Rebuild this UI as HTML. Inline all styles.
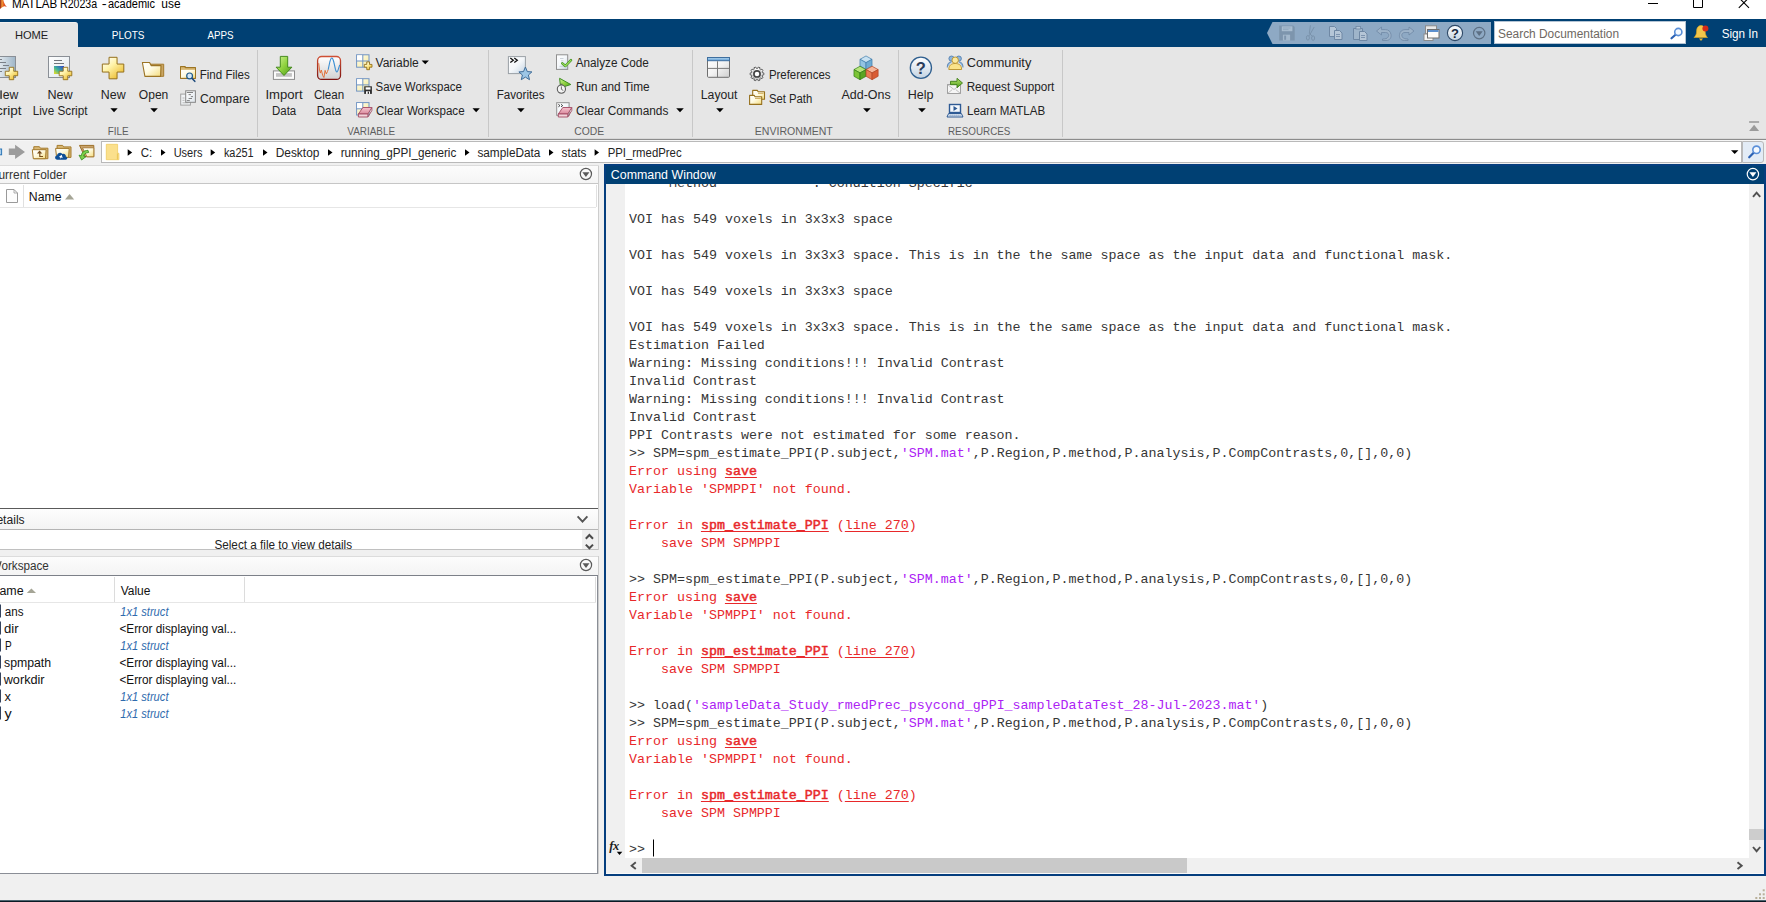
<!DOCTYPE html>
<html><head><meta charset="utf-8"><title>MATLAB R2023a - academic use</title>
<style>
html,body{margin:0;padding:0;}
body{width:1766px;height:902px;position:relative;overflow:hidden;background:#fff;font-family:"Liberation Sans",sans-serif;}
#bx div{position:absolute;}
svg{position:absolute;left:0;top:0;}
svg text{white-space:pre;}
#conwrap{position:absolute;left:625px;top:184px;width:1124px;height:674px;overflow:hidden;}
#con{position:absolute;left:4px;top:-8.55px;margin:0;font-family:"Liberation Mono",monospace;font-size:12.200px;line-height:18px;color:#363636;white-space:pre;transform:scaleX(1.09272);transform-origin:0 0;}
#con .s{color:#ad22f5;}
#con .e{color:#e8282a;}
#con b{font-weight:normal;-webkit-text-stroke:.45px currentColor;}
#con u{text-decoration:underline;text-underline-offset:1.5px;text-decoration-thickness:1px;}
</style></head>
<body>
<div id="bx">
<div style="left:0px;top:19px;width:1766px;height:28px;background:#004073;"></div>
<div style="left:0px;top:47px;width:1766px;height:92px;background:#e6e6e6;"></div>
<div style="left:0px;top:138px;width:1766px;height:1px;background:#d8d8d8;"></div>
<div style="left:0px;top:139px;width:1766px;height:1px;background:#8c8c8c;"></div>
<div style="left:0px;top:140px;width:1766px;height:1px;background:#f6f6f6;"></div>
<div style="left:0px;top:141px;width:1766px;height:25px;background:#f0f0f0;"></div>
<div style="left:0px;top:166px;width:1766px;height:735px;background:#f0f0f0;"></div>
<div style="left:0px;top:22px;width:78px;height:25px;background:#e6e6e6;border-radius:0 3px 0 0;border-top:1px solid #f3f1ef;box-sizing:border-box;"></div>
<div style="left:257px;top:50px;width:1px;height:87px;background:#c8c8c8;"></div>
<div style="left:488px;top:50px;width:1px;height:87px;background:#c8c8c8;"></div>
<div style="left:692px;top:50px;width:1px;height:87px;background:#c8c8c8;"></div>
<div style="left:898px;top:50px;width:1px;height:87px;background:#c8c8c8;"></div>
<div style="left:1062px;top:50px;width:1px;height:87px;background:#c8c8c8;"></div>
<div style="left:1494px;top:21px;width:192px;height:23px;background:#fff;border:1px solid #b4c4d4;box-sizing:border-box;"></div>
<div style="left:101px;top:141px;width:1641px;height:22px;background:#fff;border:1px solid #b9b9b9;box-sizing:border-box;"></div>
<div style="left:1742px;top:141px;width:22px;height:22px;background:#e3ecf6;border:1px solid #b9b9b9;box-sizing:border-box;border-radius:0 3px 3px 0;"></div>
<div style="left:0px;top:165px;width:599px;height:1px;background:#dcdcdc;"></div>
<div style="left:0px;top:166px;width:598px;height:18px;background:linear-gradient(#fcfcfc,#f4f4f4);"></div>
<div style="left:0px;top:183px;width:598px;height:1px;background:#c6c6c6;"></div>
<div style="left:0px;top:184px;width:598px;height:324px;background:#fff;"></div>
<div style="left:0px;top:207px;width:596px;height:1px;background:#e6e6e6;"></div>
<div style="left:23px;top:185px;width:1px;height:22px;background:#e0e0e0;"></div>
<div style="left:596px;top:185px;width:1px;height:22px;background:#e0e0e0;"></div>
<div style="left:598px;top:166px;width:1px;height:708px;background:#cdcdcd;"></div>
<div style="left:0px;top:508px;width:598px;height:1px;background:#5a5a5a;"></div>
<div style="left:0px;top:509px;width:598px;height:20px;background:linear-gradient(#fdfdfd,#f3f3f3);"></div>
<div style="left:0px;top:529px;width:598px;height:1px;background:#b4b4b4;"></div>
<div style="left:0px;top:530px;width:598px;height:19px;background:#fff;"></div>
<div style="left:582px;top:530px;width:16px;height:19px;background:#f0f0f0;"></div>
<div style="left:0px;top:549px;width:598px;height:1px;background:#c0c0c0;"></div>
<div style="left:0px;top:550px;width:599px;height:6px;background:#f0f0f0;"></div>
<div style="left:0px;top:556px;width:598px;height:1px;background:#dcdcdc;"></div>
<div style="left:0px;top:557px;width:598px;height:18px;background:linear-gradient(#fcfcfc,#f4f4f4);"></div>
<div style="left:0px;top:575px;width:598px;height:1px;background:#7c8088;"></div>
<div style="left:0px;top:576px;width:598px;height:297px;background:#fff;"></div>
<div style="left:0px;top:602px;width:596px;height:1px;background:#e6e6e6;"></div>
<div style="left:114px;top:577px;width:1px;height:25px;background:#dcdcdc;"></div>
<div style="left:244px;top:577px;width:1px;height:25px;background:#dcdcdc;"></div>
<div style="left:595px;top:577px;width:1px;height:25px;background:#dcdcdc;"></div>
<div style="left:597px;top:576px;width:1px;height:298px;background:#8a8e96;"></div>
<div style="left:0px;top:873px;width:598px;height:1px;background:#8a8e96;"></div>
<div style="left:604px;top:164px;width:1162px;height:712px;background:#053e7e;"></div>
<div style="left:606px;top:166px;width:1158px;height:18px;background:#004073;"></div>
<div style="left:606px;top:184px;width:1158px;height:690px;background:#fff;"></div>
<div style="left:606px;top:184px;width:19px;height:674px;background:#f0f0f0;"></div>
<div style="left:1749px;top:184px;width:15px;height:674px;background:#f0f0f0;"></div>
<div style="left:1749px;top:829px;width:15px;height:11px;background:#cdcdcd;"></div>
<div style="left:606px;top:858px;width:1158px;height:15px;background:#f0f0f0;"></div>
<div style="left:642px;top:858px;width:545px;height:15px;background:#c9c9c9;"></div>
<div style="left:606px;top:873px;width:1158px;height:1px;background:#fafafa;"></div>
<div style="left:0px;top:900px;width:1766px;height:1px;background:#4d6570;"></div>
<div style="left:0px;top:901px;width:1766px;height:1px;background:#0a1a24;"></div>
</div>
<div id="conwrap"><pre id="con">     Method            : Condition Specific

VOI has 549 voxels in 3x3x3 space

VOI has 549 voxels in 3x3x3 space. This is in the the same space as the input data and functional mask.

VOI has 549 voxels in 3x3x3 space

VOI has 549 voxels in 3x3x3 space. This is in the the same space as the input data and functional mask.
Estimation Failed
Warning: Missing conditions!!! Invalid Contrast
Invalid Contrast
Warning: Missing conditions!!! Invalid Contrast
Invalid Contrast
PPI Contrasts were not estimated for some reason.
&gt;&gt; SPM=spm_estimate_PPI(P.subject,<span class="s">'SPM.mat'</span>,P.Region,P.method,P.analysis,P.CompContrasts,0,[],0,0)
<span class="e">Error using <b><u>save</u></b></span>
<span class="e">Variable 'SPMPPI' not found.</span>

<span class="e">Error in <b><u>spm_estimate_PPI</u></b> (<u>line 270</u>)</span>
<span class="e">    save SPM SPMPPI</span>

&gt;&gt; SPM=spm_estimate_PPI(P.subject,<span class="s">'SPM.mat'</span>,P.Region,P.method,P.analysis,P.CompContrasts,0,[],0,0)
<span class="e">Error using <b><u>save</u></b></span>
<span class="e">Variable 'SPMPPI' not found.</span>

<span class="e">Error in <b><u>spm_estimate_PPI</u></b> (<u>line 270</u>)</span>
<span class="e">    save SPM SPMPPI</span>

&gt;&gt; load(<span class="s">'sampleData_Study_rmedPrec_psycond_gPPI_sampleDataTest_28-Jul-2023.mat'</span>)
&gt;&gt; SPM=spm_estimate_PPI(P.subject,<span class="s">'SPM.mat'</span>,P.Region,P.method,P.analysis,P.CompContrasts,0,[],0,0)
<span class="e">Error using <b><u>save</u></b></span>
<span class="e">Variable 'SPMPPI' not found.</span>

<span class="e">Error in <b><u>spm_estimate_PPI</u></b> (<u>line 270</u>)</span>
<span class="e">    save SPM SPMPPI</span>

&gt;&gt; </pre></div>
<svg width="1766" height="902" viewBox="0 0 1766 902">
<path d="M1267 33L1272.5 22H1491V44H1272.5Z" fill="#8ea9c4"/>
<text x="11.90" y="7.80" textLength="45.40" lengthAdjust="spacingAndGlyphs" style="font-family:'Liberation Sans',sans-serif;font-size:12px;fill:#000;">MATLAB</text>
<text x="60.00" y="7.80" textLength="37.10" lengthAdjust="spacingAndGlyphs" style="font-family:'Liberation Sans',sans-serif;font-size:12px;fill:#000;">R2023a</text>
<text x="101.80" y="7.80" textLength="4.90" lengthAdjust="spacingAndGlyphs" style="font-family:'Liberation Sans',sans-serif;font-size:12px;fill:#000;">-</text>
<text x="108.00" y="7.80" textLength="47.00" lengthAdjust="spacingAndGlyphs" style="font-family:'Liberation Sans',sans-serif;font-size:12px;fill:#000;">academic</text>
<text x="161.30" y="7.80" textLength="19.30" lengthAdjust="spacingAndGlyphs" style="font-family:'Liberation Sans',sans-serif;font-size:12px;fill:#000;">use</text>
<text x="14.90" y="38.80" textLength="33.40" lengthAdjust="spacingAndGlyphs" style="font-family:'Liberation Sans',sans-serif;font-size:11.5px;fill:#1e1e1e;">HOME</text>
<text x="111.80" y="38.80" textLength="32.70" lengthAdjust="spacingAndGlyphs" style="font-family:'Liberation Sans',sans-serif;font-size:11.5px;fill:#fff;">PLOTS</text>
<text x="207.50" y="38.80" textLength="26.10" lengthAdjust="spacingAndGlyphs" style="font-family:'Liberation Sans',sans-serif;font-size:11.5px;fill:#fff;">APPS</text>
<text x="1498.00" y="37.80" textLength="121.00" lengthAdjust="spacingAndGlyphs" style="font-family:'Liberation Sans',sans-serif;font-size:12.5px;fill:#6e6862;">Search Documentation</text>
<text x="1721.70" y="37.80" textLength="36.40" lengthAdjust="spacingAndGlyphs" style="font-family:'Liberation Sans',sans-serif;font-size:12.5px;fill:#fff;">Sign In</text>
<text x="2.70" y="98.90" textLength="15.60" lengthAdjust="spacingAndGlyphs" style="font-family:'Liberation Sans',sans-serif;font-size:12px;fill:#242424;">ew</text>
<rect x="0.4" y="90.400" width="1.300" height="8.500" fill="#1e1e1e"/>
<text x="-4.00" y="114.90" textLength="25.60" lengthAdjust="spacingAndGlyphs" style="font-family:'Liberation Sans',sans-serif;font-size:12px;fill:#242424;">cript</text>
<text x="47.40" y="98.90" textLength="25.20" lengthAdjust="spacingAndGlyphs" style="font-family:'Liberation Sans',sans-serif;font-size:12px;fill:#242424;">New</text>
<text x="32.70" y="114.90" textLength="54.80" lengthAdjust="spacingAndGlyphs" style="font-family:'Liberation Sans',sans-serif;font-size:12px;fill:#242424;">Live Script</text>
<text x="100.80" y="98.90" textLength="24.80" lengthAdjust="spacingAndGlyphs" style="font-family:'Liberation Sans',sans-serif;font-size:12px;fill:#242424;">New</text>
<text x="138.80" y="98.90" textLength="29.50" lengthAdjust="spacingAndGlyphs" style="font-family:'Liberation Sans',sans-serif;font-size:12px;fill:#242424;">Open</text>
<text x="199.70" y="78.50" textLength="50.10" lengthAdjust="spacingAndGlyphs" style="font-family:'Liberation Sans',sans-serif;font-size:12px;fill:#242424;">Find Files</text>
<text x="200.00" y="102.70" textLength="49.80" lengthAdjust="spacingAndGlyphs" style="font-family:'Liberation Sans',sans-serif;font-size:12px;fill:#242424;">Compare</text>
<text x="265.40" y="98.90" textLength="37.20" lengthAdjust="spacingAndGlyphs" style="font-family:'Liberation Sans',sans-serif;font-size:12px;fill:#242424;">Import</text>
<text x="272.00" y="114.90" textLength="24.20" lengthAdjust="spacingAndGlyphs" style="font-family:'Liberation Sans',sans-serif;font-size:12px;fill:#242424;">Data</text>
<text x="313.90" y="98.90" textLength="30.30" lengthAdjust="spacingAndGlyphs" style="font-family:'Liberation Sans',sans-serif;font-size:12px;fill:#242424;">Clean</text>
<text x="316.70" y="114.90" textLength="24.40" lengthAdjust="spacingAndGlyphs" style="font-family:'Liberation Sans',sans-serif;font-size:12px;fill:#242424;">Data</text>
<text x="375.50" y="66.80" textLength="43.30" lengthAdjust="spacingAndGlyphs" style="font-family:'Liberation Sans',sans-serif;font-size:12px;fill:#242424;">Variable</text>
<text x="375.50" y="90.60" textLength="86.40" lengthAdjust="spacingAndGlyphs" style="font-family:'Liberation Sans',sans-serif;font-size:12px;fill:#242424;">Save Workspace</text>
<text x="376.00" y="114.60" textLength="88.60" lengthAdjust="spacingAndGlyphs" style="font-family:'Liberation Sans',sans-serif;font-size:12px;fill:#242424;">Clear Workspace</text>
<text x="496.70" y="98.90" textLength="47.80" lengthAdjust="spacingAndGlyphs" style="font-family:'Liberation Sans',sans-serif;font-size:12px;fill:#242424;">Favorites</text>
<text x="575.70" y="66.80" textLength="73.10" lengthAdjust="spacingAndGlyphs" style="font-family:'Liberation Sans',sans-serif;font-size:12px;fill:#242424;">Analyze Code</text>
<text x="576.00" y="90.60" textLength="73.60" lengthAdjust="spacingAndGlyphs" style="font-family:'Liberation Sans',sans-serif;font-size:12px;fill:#242424;">Run and Time</text>
<text x="576.00" y="114.60" textLength="92.40" lengthAdjust="spacingAndGlyphs" style="font-family:'Liberation Sans',sans-serif;font-size:12px;fill:#242424;">Clear Commands</text>
<text x="700.80" y="98.90" textLength="36.70" lengthAdjust="spacingAndGlyphs" style="font-family:'Liberation Sans',sans-serif;font-size:12px;fill:#242424;">Layout</text>
<text x="768.90" y="78.50" textLength="61.60" lengthAdjust="spacingAndGlyphs" style="font-family:'Liberation Sans',sans-serif;font-size:12px;fill:#242424;">Preferences</text>
<text x="768.90" y="102.70" textLength="43.30" lengthAdjust="spacingAndGlyphs" style="font-family:'Liberation Sans',sans-serif;font-size:12px;fill:#242424;">Set Path</text>
<text x="841.50" y="98.90" textLength="49.10" lengthAdjust="spacingAndGlyphs" style="font-family:'Liberation Sans',sans-serif;font-size:12px;fill:#242424;">Add-Ons</text>
<text x="907.70" y="98.90" textLength="25.70" lengthAdjust="spacingAndGlyphs" style="font-family:'Liberation Sans',sans-serif;font-size:12px;fill:#242424;">Help</text>
<text x="966.70" y="66.80" textLength="64.60" lengthAdjust="spacingAndGlyphs" style="font-family:'Liberation Sans',sans-serif;font-size:12px;fill:#242424;">Community</text>
<text x="966.70" y="90.60" textLength="87.60" lengthAdjust="spacingAndGlyphs" style="font-family:'Liberation Sans',sans-serif;font-size:12px;fill:#242424;">Request Support</text>
<text x="967.00" y="114.60" textLength="78.10" lengthAdjust="spacingAndGlyphs" style="font-family:'Liberation Sans',sans-serif;font-size:12px;fill:#242424;">Learn MATLAB</text>
<text x="107.70" y="134.80" textLength="21.00" lengthAdjust="spacingAndGlyphs" style="font-family:'Liberation Sans',sans-serif;font-size:11.5px;fill:#5f5f5f;">FILE</text>
<text x="347.30" y="134.80" textLength="47.80" lengthAdjust="spacingAndGlyphs" style="font-family:'Liberation Sans',sans-serif;font-size:11.5px;fill:#5f5f5f;">VARIABLE</text>
<text x="574.20" y="134.80" textLength="29.90" lengthAdjust="spacingAndGlyphs" style="font-family:'Liberation Sans',sans-serif;font-size:11.5px;fill:#5f5f5f;">CODE</text>
<text x="754.80" y="134.80" textLength="78.00" lengthAdjust="spacingAndGlyphs" style="font-family:'Liberation Sans',sans-serif;font-size:11.5px;fill:#5f5f5f;">ENVIRONMENT</text>
<text x="948.00" y="134.80" textLength="62.40" lengthAdjust="spacingAndGlyphs" style="font-family:'Liberation Sans',sans-serif;font-size:11.5px;fill:#5f5f5f;">RESOURCES</text>
<path d="M110.40 108.30H117.70L114.05 112.20Z" fill="#000"/>
<path d="M150.30 108.30H157.80L154.05 112.20Z" fill="#000"/>
<path d="M517.20 108.30H524.60L520.90 112.20Z" fill="#000"/>
<path d="M716.20 108.30H723.60L719.90 112.20Z" fill="#000"/>
<path d="M863.10 108.30H870.70L866.90 112.20Z" fill="#000"/>
<path d="M918.10 108.30H925.80L921.95 112.20Z" fill="#000"/>
<path d="M472.50 108.30H479.80L476.15 112.20Z" fill="#000"/>
<path d="M676.20 108.30H683.80L680.00 112.20Z" fill="#000"/>
<path d="M421.60 60.60H428.90L425.25 64.30Z" fill="#000"/>
<text x="140.80" y="156.90" textLength="11.50" lengthAdjust="spacingAndGlyphs" style="font-family:'Liberation Sans',sans-serif;font-size:12px;fill:#242424;">C:</text>
<text x="173.70" y="156.90" textLength="28.70" lengthAdjust="spacingAndGlyphs" style="font-family:'Liberation Sans',sans-serif;font-size:12px;fill:#242424;">Users</text>
<text x="223.90" y="156.90" textLength="29.70" lengthAdjust="spacingAndGlyphs" style="font-family:'Liberation Sans',sans-serif;font-size:12px;fill:#242424;">ka251</text>
<text x="275.70" y="156.90" textLength="43.70" lengthAdjust="spacingAndGlyphs" style="font-family:'Liberation Sans',sans-serif;font-size:12px;fill:#242424;">Desktop</text>
<text x="340.70" y="156.90" textLength="115.60" lengthAdjust="spacingAndGlyphs" style="font-family:'Liberation Sans',sans-serif;font-size:12px;fill:#242424;">running_gPPI_generic</text>
<text x="477.40" y="156.90" textLength="63.00" lengthAdjust="spacingAndGlyphs" style="font-family:'Liberation Sans',sans-serif;font-size:12px;fill:#242424;">sampleData</text>
<text x="561.50" y="156.90" textLength="24.90" lengthAdjust="spacingAndGlyphs" style="font-family:'Liberation Sans',sans-serif;font-size:12px;fill:#242424;">stats</text>
<text x="607.70" y="156.90" textLength="73.90" lengthAdjust="spacingAndGlyphs" style="font-family:'Liberation Sans',sans-serif;font-size:12px;fill:#242424;">PPI_rmedPrec</text>
<path d="M127.70 149.20V155.80L132.20 152.50Z" fill="#000"/>
<path d="M161.00 149.20V155.80L165.50 152.50Z" fill="#000"/>
<path d="M210.70 149.20V155.80L215.20 152.50Z" fill="#000"/>
<path d="M263.00 149.20V155.80L267.50 152.50Z" fill="#000"/>
<path d="M328.00 149.20V155.80L332.50 152.50Z" fill="#000"/>
<path d="M465.00 149.20V155.80L469.50 152.50Z" fill="#000"/>
<path d="M549.00 149.20V155.80L553.50 152.50Z" fill="#000"/>
<path d="M594.60 149.20V155.80L599.10 152.50Z" fill="#000"/>
<path d="M1731.00 150.20H1738.40L1734.70 154.00Z" fill="#000"/>
<text x="-1.50" y="178.60" textLength="68.10" lengthAdjust="spacingAndGlyphs" style="font-family:'Liberation Sans',sans-serif;font-size:12px;fill:#333;">urrent Folder</text>
<text x="28.80" y="200.50" textLength="32.70" lengthAdjust="spacingAndGlyphs" style="font-family:'Liberation Sans',sans-serif;font-size:12px;fill:#111;">Name</text>
<text x="-3.60" y="523.70" textLength="28.20" lengthAdjust="spacingAndGlyphs" style="font-family:'Liberation Sans',sans-serif;font-size:12px;fill:#222;">etails</text>
<text x="214.40" y="548.60" textLength="137.70" lengthAdjust="spacingAndGlyphs" style="font-family:'Liberation Sans',sans-serif;font-size:12px;fill:#222;">Select a file to view details</text>
<text x="1.40" y="569.60" textLength="47.50" lengthAdjust="spacingAndGlyphs" style="font-family:'Liberation Sans',sans-serif;font-size:12px;fill:#333;">orkspace</text>
<path d="M-1.300 569.600L1.100 561.200" stroke="#444" stroke-width="1.200"/>
<text x="-0.60" y="594.80" textLength="24.20" lengthAdjust="spacingAndGlyphs" style="font-family:'Liberation Sans',sans-serif;font-size:12px;fill:#111;">ame</text>
<text x="120.70" y="594.80" textLength="29.70" lengthAdjust="spacingAndGlyphs" style="font-family:'Liberation Sans',sans-serif;font-size:12px;fill:#111;">Value</text>
<text x="610.80" y="178.60" textLength="104.80" lengthAdjust="spacingAndGlyphs" style="font-family:'Liberation Sans',sans-serif;font-size:12px;fill:#fff;">Command Window</text>
<path d="M65 199.4L69.6 194L74.2 199.4Z" fill="#a5a596"/>
<path d="M26.8 593L31.4 588.4L36 593Z" fill="#a5a596"/>
<text x="4.80" y="615.50" textLength="18.70" lengthAdjust="spacingAndGlyphs" style="font-family:'Liberation Sans',sans-serif;font-size:12px;fill:#111;">ans</text>
<text x="120.20" y="615.50" textLength="48.30" lengthAdjust="spacingAndGlyphs" style="font-family:'Liberation Sans',sans-serif;font-size:12px;fill:#2f6bae;font-style:italic;">1x1 struct</text>
<rect x="0" y="604.5" width="1" height="13" fill="#34435e"/>
<text x="4.00" y="632.50" textLength="14.60" lengthAdjust="spacingAndGlyphs" style="font-family:'Liberation Sans',sans-serif;font-size:12px;fill:#111;">dir</text>
<text x="119.40" y="632.50" textLength="117.00" lengthAdjust="spacingAndGlyphs" style="font-family:'Liberation Sans',sans-serif;font-size:12px;fill:#111;">&lt;Error displaying val...</text>
<rect x="0" y="621.5" width="1" height="13" fill="#34435e"/>
<text x="5.10" y="649.50" textLength="6.70" lengthAdjust="spacingAndGlyphs" style="font-family:'Liberation Sans',sans-serif;font-size:12px;fill:#111;">P</text>
<text x="120.20" y="649.50" textLength="48.30" lengthAdjust="spacingAndGlyphs" style="font-family:'Liberation Sans',sans-serif;font-size:12px;fill:#2f6bae;font-style:italic;">1x1 struct</text>
<rect x="0" y="638.5" width="1" height="13" fill="#34435e"/>
<text x="4.00" y="666.50" textLength="47.10" lengthAdjust="spacingAndGlyphs" style="font-family:'Liberation Sans',sans-serif;font-size:12px;fill:#111;">spmpath</text>
<text x="119.40" y="666.50" textLength="117.00" lengthAdjust="spacingAndGlyphs" style="font-family:'Liberation Sans',sans-serif;font-size:12px;fill:#111;">&lt;Error displaying val...</text>
<rect x="0" y="655.5" width="1" height="13" fill="#34435e"/>
<text x="3.70" y="683.50" textLength="40.90" lengthAdjust="spacingAndGlyphs" style="font-family:'Liberation Sans',sans-serif;font-size:12px;fill:#111;">workdir</text>
<text x="119.40" y="683.50" textLength="117.00" lengthAdjust="spacingAndGlyphs" style="font-family:'Liberation Sans',sans-serif;font-size:12px;fill:#111;">&lt;Error displaying val...</text>
<rect x="0" y="672.5" width="1" height="13" fill="#34435e"/>
<text x="4.40" y="700.50" textLength="6.40" lengthAdjust="spacingAndGlyphs" style="font-family:'Liberation Sans',sans-serif;font-size:12px;fill:#111;">x</text>
<text x="120.20" y="700.50" textLength="48.30" lengthAdjust="spacingAndGlyphs" style="font-family:'Liberation Sans',sans-serif;font-size:12px;fill:#2f6bae;font-style:italic;">1x1 struct</text>
<rect x="0" y="689.5" width="1" height="13" fill="#34435e"/>
<text x="4.40" y="717.50" textLength="7.20" lengthAdjust="spacingAndGlyphs" style="font-family:'Liberation Sans',sans-serif;font-size:12px;fill:#111;">y</text>
<text x="120.20" y="717.50" textLength="48.30" lengthAdjust="spacingAndGlyphs" style="font-family:'Liberation Sans',sans-serif;font-size:12px;fill:#2f6bae;font-style:italic;">1x1 struct</text>
<rect x="0" y="706.5" width="1" height="13" fill="#34435e"/>
<defs>
<linearGradient id="gGold" x1="0.1" y1="0" x2="0.9" y2="1"><stop offset="0" stop-color="#ffffff"/><stop offset=".4" stop-color="#fff3a8"/><stop offset="1" stop-color="#e9b41e"/></linearGradient>
<linearGradient id="gDoc" x1="0" y1="0" x2="1" y2="1"><stop offset="0" stop-color="#ffffff"/><stop offset="1" stop-color="#dfe6ec"/></linearGradient>
<linearGradient id="gDocB" x1="0" y1="0" x2="1" y2="0"><stop offset="0" stop-color="#ffffff"/><stop offset="1" stop-color="#9fb6c8"/></linearGradient>
<linearGradient id="gFold" x1="0" y1="0" x2="0" y2="1"><stop offset="0" stop-color="#fffdf0"/><stop offset="1" stop-color="#f5dc82"/></linearGradient>
<linearGradient id="gGreen" x1="0" y1="0" x2="0" y2="1"><stop offset="0" stop-color="#b6e36a"/><stop offset="1" stop-color="#4f9e1c"/></linearGradient>
<linearGradient id="gGrey" x1="0" y1="0" x2="0" y2="1"><stop offset="0" stop-color="#fdfdfd"/><stop offset="1" stop-color="#c9c9c9"/></linearGradient>
<linearGradient id="gHelp" x1="0" y1="0" x2="0" y2="1"><stop offset="0" stop-color="#ffffff"/><stop offset="1" stop-color="#c3d3e2"/></linearGradient>
<linearGradient id="gPink" x1="0" y1="0" x2="0" y2="1"><stop offset="0" stop-color="#f6c3cf"/><stop offset="1" stop-color="#d9899c"/></linearGradient>
<linearGradient id="gCell" x1="0" y1="0" x2="1" y2="1"><stop offset="0" stop-color="#fffef0"/><stop offset="1" stop-color="#f7e99a"/></linearGradient>
<linearGradient id="gLive" x1="0" y1="1" x2="1" y2="0"><stop offset="0" stop-color="#f7e11a"/><stop offset=".45" stop-color="#3fb39a"/><stop offset="1" stop-color="#2a3fd0"/></linearGradient>
<linearGradient id="gFoldW" x1="0" y1="0" x2="1" y2="1"><stop offset="0" stop-color="#ffffff"/><stop offset=".45" stop-color="#fffbe4"/><stop offset="1" stop-color="#f4dc7c"/></linearGradient>
<linearGradient id="gGreenH" x1="0" y1="0" x2="1" y2="1"><stop offset="0" stop-color="#d2f49a"/><stop offset=".5" stop-color="#8fd23e"/><stop offset="1" stop-color="#4c9a1a"/></linearGradient>
<linearGradient id="gGrey2" x1="0" y1="0" x2="0" y2="1"><stop offset="0" stop-color="#ffffff"/><stop offset="1" stop-color="#d2d2d2"/></linearGradient>
<linearGradient id="gRedB" x1="0" y1="0" x2="0" y2="1"><stop offset="0" stop-color="#cf4f34"/><stop offset="1" stop-color="#7e1410"/></linearGradient>
<linearGradient id="gDocB2" x1="0" y1="0" x2="1" y2="1"><stop offset="0" stop-color="#ffffff"/><stop offset=".5" stop-color="#f4f7fa"/><stop offset="1" stop-color="#c3d3e2"/></linearGradient>
<linearGradient id="gLay" x1="0" y1="0" x2="1" y2="1"><stop offset="0" stop-color="#ffffff"/><stop offset=".5" stop-color="#f3f3f3"/><stop offset="1" stop-color="#cfcfcf"/></linearGradient>
<linearGradient id="gLayB" x1="0" y1="0" x2="0" y2="1"><stop offset="0" stop-color="#b4d8f0"/><stop offset="1" stop-color="#5d9ad2"/></linearGradient>
</defs>
<linearGradient id="gLogo" x1="0" y1="0" x2="1" y2="0"><stop offset="0" stop-color="#8e1c12"/><stop offset=".3" stop-color="#f39a36"/><stop offset=".55" stop-color="#e5591f"/><stop offset="1" stop-color="#c43a2a"/></linearGradient>
<path d="M0 0H3.300C3.900 2.600 5 5 6.900 6.900C5.500 6.300 4.600 6.200 3.700 6.400C2.400 6.700 1.200 8 0 9.100Z" fill="url(#gLogo)"/>
<path d="M1648 3.5H1658" stroke="#000" stroke-width="1"/>
<path d="M1693.5 0V7.5H1702.5V0" stroke="#000" stroke-width="1" fill="none"/>
<path d="M1738.8 -2.4L1749 7.8M1749 -2.4L1738.8 7.8" stroke="#000" stroke-width="1.1"/>
<path d="M1279.200 25.400h14l1.500 1.500v13.700h-15.500Z" fill="#7d95ad"/>
<rect x="1281.800" y="26.300" width="10.600" height="4.900" fill="#a9bdd0"/>
<path d="M1283 28h7.500M1283 29.600h5.500" stroke="#8ba2b9" stroke-width=".7"/>
<rect x="1282.900" y="34.700" width="7.200" height="5.900" fill="#a3b8cc"/>
<rect x="1284.200" y="35.600" width="1.900" height="4.200" fill="#7d95ad"/>
<path d="M1310.400 25.300L1309.300 33.500L1312.400 36.200M1314.200 27L1309.200 35.800" stroke="#7a93ac" stroke-width="1" fill="none"/>
<ellipse cx="1307.900" cy="37.800" rx="1.500" ry="2.300" fill="none" stroke="#7a93ac" stroke-width="1"/><ellipse cx="1313.100" cy="38.100" rx="1.500" ry="2.300" fill="none" stroke="#7a93ac" stroke-width="1"/>
<path d="M1329.5 26.5h5l2 2v8h-7Z" fill="#b5c6d7" stroke="#6f88a4" stroke-width="1"/>
<path d="M1334.5 30.5h5l2.5 2.5v6.5h-7.5Z" fill="#b5c6d7" stroke="#6f88a4" stroke-width="1"/>
<path d="M1336 34.5h4M1336 36.5h4" stroke="#6f88a4" stroke-width=".8"/>
<path d="M1353.5 28.5h9v11h-9Z" fill="#9fb5ca" stroke="#6f88a4" stroke-width="1"/>
<rect x="1356" y="26.5" width="4.5" height="2.5" fill="#b5c6d7" stroke="#6f88a4" stroke-width=".8"/>
<path d="M1359.5 31.5h5l2.5 2.5v6.5h-7.5Z" fill="#b5c6d7" stroke="#6f88a4" stroke-width="1"/>
<path d="M1361 35.5h4M1361 37.5h4" stroke="#6f88a4" stroke-width=".8"/>
<path d="M1381.5 27L1376.5 31L1381.5 35V32.5H1385.5C1388.5 32.5 1389.5 35 1388 37.2C1387 38.6 1385.5 39 1382.5 39V40.5H1386C1390 40.5 1391.5 37.5 1391 34.5C1390.5 31.5 1388.5 29.6 1385.5 29.6H1381.5Z" fill="#9db3c9" stroke="#6f88a4" stroke-width=".8" stroke-linejoin="round"/>
<path d="M1409 27L1414 31L1409 35V32.5H1405C1402 32.5 1401 35 1402.5 37.2C1403.5 38.6 1405 39 1408 39V40.5H1404.5C1400.5 40.5 1399 37.5 1399.5 34.5C1400 31.5 1402 29.6 1405 29.6H1409Z" fill="#9db3c9" stroke="#6f88a4" stroke-width=".8" stroke-linejoin="round"/>
<rect x="1425.5" y="25.8" width="11" height="8" fill="#e8e8e8" stroke="#8c8c8c" stroke-width="1"/>
<rect x="1424" y="34" width="9" height="6.5" fill="#f4f4f4" stroke="#8c8c8c" stroke-width="1"/>
<rect x="1427.5" y="29.5" width="11.5" height="8.5" fill="#fbfbfb" stroke="#6e6e6e" stroke-width="1"/>
<rect x="1428" y="30" width="10.5" height="2" fill="#5b8fce"/>
<circle cx="1455" cy="33" r="7.6" fill="url(#gHelp)" stroke="#2f4a68" stroke-width="1.1"/>
<text x="1455" y="37.6" text-anchor="middle" style="font-family:'Liberation Sans',sans-serif;font-weight:bold;font-size:13px;fill:#16283c">?</text>
<circle cx="1479.2" cy="33.1" r="5.7" fill="none" stroke="#5c6f84" stroke-width="1.2"/>
<path d="M1475.7 31.3h7L1479.2 36.0Z" fill="#5c6f84"/>
<path d="M1675.78 34.52L1671.5 38.3" stroke="#2c62b4" stroke-width="2.2" stroke-linecap="round"/>
<circle cx="1678.3" cy="32" r="3.6" fill="#f4f9ff" stroke="#5a8fd8" stroke-width="1.6"/>
<path d="M1701 25.5C1698 25.5 1696.6 28 1696.6 31C1696.6 34.5 1695.5 36 1694 37.5H1707.5C1706 36 1705.2 34.5 1705.2 31C1705.2 28 1704 25.5 1701 25.5Z" fill="#f4c64a" stroke="#d9a520" stroke-width=".6"/>
<path d="M1699 38.5H1703L1701 41Z" fill="#eab530"/>
<circle cx="1705.4" cy="28.6" r="3" fill="#d42a18"/>
<rect x="-8" y="56.5" width="23.5" height="21" fill="url(#gDocB)" stroke="#8a8f96" stroke-width="1"/>
<path d="M0 59.5h2M0 62.5h6M3 65.5h6M0 68.5h6M0 71.5h2" stroke="#7a8088" stroke-width="1"/>
<path d="M9.27 67.30h4.46v3.97h3.97v4.46h-3.97v3.97h-4.46v-3.97h-3.97v-4.46h3.97Z" fill="url(#gGold)" stroke="#94701c" stroke-width="0.9" stroke-linejoin="round"/>
<rect x="48.5" y="56.5" width="21" height="21" fill="url(#gDoc)" stroke="#8a8f96" stroke-width="1"/>
<path d="M54 60.5h8M54 63.5h10" stroke="#70757b" stroke-width="1"/>
<rect x="54" y="66" width="10" height="8" fill="url(#gLive)"/>
<path d="M63.23 67.30h4.54v3.93h4.03v4.54h-4.03v3.93h-4.54v-3.93h-4.03v-4.54h4.03Z" fill="url(#gGold)" stroke="#94701c" stroke-width="0.9" stroke-linejoin="round"/>
<path d="M109.05 57.30h8.00v6.75h6.75v8.00h-6.75v6.75h-8.00v-6.75h-6.75v-8.00h6.75Z" fill="url(#gGold)" stroke="#94701c" stroke-width="1" stroke-linejoin="round"/>
<path d="M150 64.2h13.700v12.100h-13.700Z" fill="#c9a563" stroke="#a47a2c" stroke-width="1" stroke-linejoin="round"/>
<path d="M142.400 62.500h7.200l1.500 3.100h9.900l-.4 10.800h-15.700Z" fill="url(#gFoldW)" stroke="#9c7424" stroke-width="1.100" stroke-linejoin="round"/>
<path d="M180.500 66.600h4.700v1h10.300v10.800h-15Z" fill="#d9b873" stroke="#9c7424" stroke-width="1" stroke-linejoin="round"/>
<path d="M181 69.900h14v8h-14Z" fill="url(#gFoldW)"/>
<path d="M180.500 66.600h4.700v1h10.300v10.800h-15Z" fill="none" stroke="#9c7424" stroke-width="1" stroke-linejoin="round"/>
<circle cx="189.600" cy="75.900" r="2.900" fill="#d6e8f6" stroke="#1f5a8a" stroke-width="1.200"/>
<path d="M191.900 78.300L194.800 81.300" stroke="#1d4a7c" stroke-width="1.600" stroke-linecap="round"/>
<rect x="180.700" y="94.100" width="9.700" height="11" fill="#f1f3f5" stroke="#a2a2a2" stroke-width="1"/>
<path d="M182.500 98h2M182.500 100.300h2M182.500 102.800h6" stroke="#b0b0b0" stroke-width=".9"/>
<rect x="185.700" y="90.800" width="9.700" height="11.500" fill="url(#gDoc)" stroke="#858585" stroke-width="1"/>
<path d="M186.800 92.500h6.200M188.600 94.600h2.300M190.900 96.600h2.100M188.600 98.500h3.400M186.800 100.600h3" stroke="#757575" stroke-width=".9"/>
<rect x="273.400" y="70.900" width="21.100" height="8.500" fill="#fbfbfb" stroke="#8d8d8d" stroke-width="1"/>
<rect x="276" y="73.100" width="15.900" height="3.700" fill="#c2c2c2"/>
<path d="M280.300 56.400h7.400v10.800h4.200l-7.900 8.300l-7.900-8.300h4.200Z" fill="url(#gGreenH)" stroke="#3a8212" stroke-width=".9" stroke-linejoin="round"/>
<rect x="317.600" y="56.500" width="22.900" height="22.900" rx="4" fill="url(#gGrey2)" stroke="url(#gRedB)" stroke-width="1.300"/>
<path d="M318.700 63.200L319.500 70L320.300 73.100L321.300 70L322.700 75.500L323.900 77.500L325.100 70.400L326.300 73.900L327.500 71.500L328.200 69.600" fill="none" stroke="#e2703a" stroke-width="1" stroke-linejoin="round"/>
<path d="M328.200 69.600L329.800 62C330.600 59 331.200 58 331.800 58C332.600 58 333.200 59.500 333.800 62L335.400 69.200C336 71.500 336.500 72.200 337 72C337.700 71.700 338.100 70.300 338.600 68.400L339.700 64.800" fill="none" stroke="#3a8ed2" stroke-width="1.100" stroke-linejoin="round"/>
<rect x="356.6" y="54.8" width="12.4" height="12.4" fill="url(#gCell)" stroke="#6f93c4" stroke-width="1"/>
<rect x="357.1" y="55.3" width="5.7" height="5.7" fill="#ffffff"/>
<path d="M362.8 54.8v12.4M356.6 61.0h12.4" stroke="#6f93c4" stroke-width="1" fill="none"/>
<path d="M366.76 61.90h2.77v2.51h2.46v2.77h-2.46v2.51h-2.77v-2.51h-2.46v-2.77h2.46Z" fill="url(#gGold)" stroke="#94701c" stroke-width="0.9" stroke-linejoin="round"/>
<rect x="356.6" y="78.7" width="12.4" height="12.4" fill="url(#gCell)" stroke="#6f93c4" stroke-width="1"/>
<rect x="357.1" y="79.2" width="5.7" height="5.7" fill="#ffffff"/>
<path d="M362.8 78.7v12.4M356.6 84.9h12.4" stroke="#6f93c4" stroke-width="1" fill="none"/>
<rect x="364.200" y="86.300" width="7.700" height="7.600" fill="#2e2e2e"/>
<rect x="365.600" y="87.300" width="4.900" height="2.300" fill="#ffffff"/>
<rect x="366" y="91.300" width="4" height="2.600" fill="#ffffff"/><rect x="367.700" y="91.600" width="1.300" height="2.300" fill="#2e2e2e"/>
<rect x="356.6" y="102.6" width="12.4" height="12.4" fill="url(#gCell)" stroke="#6f93c4" stroke-width="1"/>
<rect x="357.1" y="103.1" width="5.7" height="5.7" fill="#ffffff"/>
<path d="M362.8 102.6v12.4M356.6 108.8h12.4" stroke="#6f93c4" stroke-width="1" fill="none"/>
<path d="M362.9 107.5h9l-4 6.5h-9.5Z" fill="url(#gPink)" stroke="#a34a62" stroke-width=".9" stroke-linejoin="round"/>
<path d="M358.4 114.0h9.5v3h-9.5Z" fill="#f3d3da" stroke="#a34a62" stroke-width=".9" stroke-linejoin="round"/>
<path d="M367.9 117.0l4 -6.5v-3" fill="none" stroke="#a34a62" stroke-width=".9" stroke-linejoin="round"/>
<rect x="508.400" y="56.600" width="17" height="17" fill="url(#gDocB2)" stroke="#9aa0a6" stroke-width="1"/>
<path d="M510.300 58l3 2.300l-3 2.300M514.300 58l3 2.300l-3 2.300" fill="none" stroke="#111" stroke-width="1.300"/>
<path d="M525.400 67l1.900 4.600l4.600 0.300l-3.500 3.100l1.100 4.700l-4.100-2.600l-4.100 2.600l1.100-4.700l-3.500-3.100l4.600-0.300Z" fill="#9cc6e6" stroke="#3f6c98" stroke-width="1" stroke-linejoin="round"/>
<rect x="556.500" y="54.800" width="11.200" height="14.600" fill="url(#gDocB2)" stroke="#8f8f8f" stroke-width="1"/>
<path d="M560 58.500h3.500M561 60.800h2.500M559.500 66.300h4.500" stroke="#c0c8d0" stroke-width=".8"/>
<path d="M562.300 63.400l3.100 2.600l5.600-5.800" fill="none" stroke="#3d8f1f" stroke-width="2.500" stroke-linecap="round" stroke-linejoin="round"/>
<path d="M562.300 63.400l3.100 2.600l5.600-5.800" fill="none" stroke="#9cdc5c" stroke-width="1.200" stroke-linecap="round" stroke-linejoin="round"/>
<path d="M559.600 78.300l11.200 6.200l-10.200 3.300Z" fill="url(#gGreenH)" stroke="#3f8f22" stroke-width="1" stroke-linejoin="round"/>
<circle cx="561.400" cy="89.100" r="4.100" fill="#f4f4f4" stroke="#5e5e5e" stroke-width="1.100"/>
<path d="M561.400 86.400v2.900l1.900 1.200M560.200 84.200h2.400M561.400 84.200v.8" fill="none" stroke="#5e5e5e" stroke-width=".9"/>
<rect x="556.700" y="102.700" width="12.400" height="12.600" fill="url(#gDocB2)" stroke="#8f8f8f" stroke-width="1"/>
<path d="M558.300 104.300l1.700 1.300l-1.700 1.300M561 104.300l1.700 1.300l-1.700 1.300" fill="none" stroke="#222" stroke-width=".8"/>
<path d="M562.8 107.5h9l-4 6.5h-9.5Z" fill="url(#gPink)" stroke="#a34a62" stroke-width=".9" stroke-linejoin="round"/>
<path d="M558.3 114.0h9.5v3h-9.5Z" fill="#f3d3da" stroke="#a34a62" stroke-width=".9" stroke-linejoin="round"/>
<path d="M567.8 117.0l4 -6.5v-3" fill="none" stroke="#a34a62" stroke-width=".9" stroke-linejoin="round"/>
<rect x="707.500" y="57.500" width="22" height="19.800" rx="1" fill="url(#gLay)" stroke="#6f6f6f" stroke-width="1"/>
<rect x="707.500" y="57.500" width="22" height="3.200" fill="url(#gLayB)" stroke="#3f6f9f" stroke-width="1"/>
<path d="M717.500 61.200v16M707.500 68.400h22" stroke="#7a7a7a" stroke-width="1" fill="none"/>
<path d="M763.83 72.95L763.83 74.85L762.37 75.07L762.03 76.12L763.09 77.15L761.97 78.69L760.66 78.00L759.77 78.65L760.02 80.11L758.21 80.69L757.55 79.37L756.45 79.37L755.79 80.69L753.98 80.11L754.23 78.65L753.34 78.00L752.03 78.69L750.91 77.15L751.97 76.12L751.63 75.07L750.17 74.85L750.17 72.95L751.63 72.73L751.97 71.68L750.91 70.65L752.03 69.11L753.34 69.80L754.23 69.15L753.98 67.69L755.79 67.11L756.45 68.43L757.55 68.43L758.21 67.11L760.02 67.69L759.77 69.15L760.66 69.80L761.97 69.11L763.09 70.65L762.03 71.68L762.37 72.73Z" fill="url(#gGrey)" stroke="#606060" stroke-width="1" stroke-linejoin="round"/>
<circle cx="757" cy="73.900" r="3.100" fill="#ffffff" stroke="#454545" stroke-width="1.700"/>
<path d="M752.700 90.400h4.600l.9 1.400h6.300v7.500h-11.800Z" fill="url(#gFoldW)" stroke="#96701e" stroke-width="1.100" stroke-linejoin="round"/>
<path d="M758 93.300h5.500" stroke="#c9a24c" stroke-width=".9"/>
<path d="M749.600 95.400h4.600l.9 1.400h6.600v7.600h-12.100Z" fill="url(#gFoldW)" stroke="#96701e" stroke-width="1.100" stroke-linejoin="round"/>
<path d="M755 98.400h5.800" stroke="#c9a24c" stroke-width=".9"/>
<path d="M866 55.949999999999996L872.03 59.30L866 62.65L859.97 59.30Z" fill="#c8e1f1" stroke="#3f7dac" stroke-width=".7" stroke-linejoin="round"/>
<path d="M859.97 59.30L866 62.65V69.35L859.97 66.00Z" fill="#93c3e2" stroke="#3f7dac" stroke-width=".7" stroke-linejoin="round"/>
<path d="M872.03 59.30L866 62.65V69.35L872.03 66.00Z" fill="#6fabd3" stroke="#3f7dac" stroke-width=".7" stroke-linejoin="round"/>
<path d="M860 66.25L866.03 69.60L860 72.95L853.97 69.60Z" fill="#b7e47a" stroke="#2f7d14" stroke-width=".7" stroke-linejoin="round"/>
<path d="M853.97 69.60L860 72.95V79.65L853.97 76.30Z" fill="#7cc436" stroke="#2f7d14" stroke-width=".7" stroke-linejoin="round"/>
<path d="M866.03 69.60L860 72.95V79.65L866.03 76.30Z" fill="#5aa522" stroke="#2f7d14" stroke-width=".7" stroke-linejoin="round"/>
<path d="M872.1 66.25L878.13 69.60L872.1 72.95L866.07 69.60Z" fill="#f6b69a" stroke="#b24422" stroke-width=".7" stroke-linejoin="round"/>
<path d="M866.07 69.60L872.1 72.95V79.65L866.07 76.30Z" fill="#e97d55" stroke="#b24422" stroke-width=".7" stroke-linejoin="round"/>
<path d="M878.13 69.60L872.1 72.95V79.65L878.13 76.30Z" fill="#d95c34" stroke="#b24422" stroke-width=".7" stroke-linejoin="round"/>
<circle cx="920.900" cy="67.800" r="10.600" fill="url(#gHelp)" stroke="#2f5f8f" stroke-width="1.300"/>
<text x="920.900" y="73.700" text-anchor="middle" style="font-family:'Liberation Sans',sans-serif;font-weight:bold;font-size:16.500px;fill:#2a3d5c">?</text>
<circle cx="951.500" cy="58.600" r="2.600" fill="#8db4dc" stroke="#4a78aa" stroke-width=".8"/><circle cx="958.800" cy="58.600" r="2.600" fill="#8db4dc" stroke="#4a78aa" stroke-width=".8"/>
<path d="M947.300 67.500c0-4 1.500-5.500 4.200-5.500M963 67.500c0-4-1.500-5.500-4.200-5.500" fill="#8db4dc" stroke="#4a78aa" stroke-width=".8"/>
<circle cx="955.200" cy="60.200" r="3.200" fill="#fbe9a0" stroke="#b8902a" stroke-width=".9"/>
<path d="M948.800 69.500c0-4.500 2.800-6 6.400-6c3.600 0 6.400 1.500 6.400 6Z" fill="#fbe38a" stroke="#b8902a" stroke-width=".9" stroke-linejoin="round"/>
<rect x="947.500" y="84.500" width="13" height="9" fill="#f6f6f6" stroke="#a0a0a0" stroke-width="1"/>
<path d="M947.500 84.500l6.500 5l6.500-5M947.500 93.500l4.800-4M960.500 93.500l-4.800-4" fill="none" stroke="#b0b0b0" stroke-width=".8"/>
<path d="M950.500 81.300h6.500v-3l5.500 4.700l-5.500 4.700v-3h-6.500Z" fill="url(#gGreen)" stroke="#3c7d16" stroke-width=".9" stroke-linejoin="round"/>
<rect x="949.500" y="104.500" width="11" height="8" fill="#f4f8fc" stroke="#2e5a94" stroke-width="1.400"/>
<path d="M953.500 106l4 2.500l-4 2.500Z" fill="#2e5a94"/>
<path d="M948.600 113.500h12.800l1.600 3.500h-16Z" fill="#dfe8f2" stroke="#2e5a94" stroke-width="1"/>
<path d="M949.500 115.200h11" stroke="#2e5a94" stroke-width=".7" stroke-dasharray="1.2 .8"/>
<rect x="1749.100" y="121.200" width="10" height="1.600" fill="#9c9c9c"/><path d="M1749.100 131h10L1754.100 124.800Z" fill="#9a9a9a"/>
<rect x="-1" y="149" width="2.600" height="5.800" fill="#a9cdea" stroke="#2f78b8" stroke-width="1"/>
<path d="M8.800 148.600h6.300v-3.800l9.900 7.100l-9.900 7.100v-3.900h-6.300Z" fill="#9c9c9c"/>
<path d="M33.80 146.70h5.62l1 1.500h7.48v10.50h-14.10Z" fill="#d9b875" stroke="#a47a2c" stroke-width="1" stroke-linejoin="round"/>
<path d="M32.30 149.70h13.80l-.6 9.00h-12.20Z" fill="url(#gFoldW)" stroke="#a47a2c" stroke-width="1" stroke-linejoin="round"/>
<path d="M39.600 150.600l2.700 2.900h-1.900v2.400h2.600v1h-3.800v-3.400h-2.300Z" fill="#7a4f1c"/>
<path d="M57.10 145.40h5.54l1 1.500h7.36v10.50h-13.90Z" fill="#d9b875" stroke="#a47a2c" stroke-width="1" stroke-linejoin="round"/>
<path d="M55.60 148.40h13.60l-.6 9.00h-12.00Z" fill="url(#gFoldW)" stroke="#a47a2c" stroke-width="1" stroke-linejoin="round"/>
<path d="M57.300 159.700c-2.700 0-3-3.700-.3-4.100c.3-2.600 3.500-3.700 5.300-1.700c2-.9 4 .8 3.500 2.600c2 .3 2 3.200-.2 3.200Z" fill="#0f4f96"/>
<path d="M61.700 154.700l-2.900 2.200l1.500.3l-.4 1.600l1.500-1.200l1.300.6Z" fill="#ffffff"/>
<path d="M79.500 145.400h14.300v11.300h-9Z" fill="#c9a36b" stroke="#9c6f28" stroke-width="1" stroke-linejoin="round"/>
<path d="M82.500 147.800h11.300v9h-6.800Z" fill="url(#gFoldW)" stroke="#9c6f28" stroke-width=".8" stroke-linejoin="round"/>
<path d="M88 150.300c-4.500.3-6.500 2.600-6.700 5.600l-2.300-.8l2.600 4.900l4.300-3.300l-2.300-.6c.4-2 2-3.400 5.100-3.600Z" fill="#7fd24c" stroke="#2f8a1c" stroke-width=".8" stroke-linejoin="round"/>
<path d="M106.300 144.300h11.300v9h1.300v6.400h-12.600Z" fill="#fbe08c" stroke="#f0cd62" stroke-width=".8"/>
<path d="M117.400 153.500v6" stroke="#e9c24e" stroke-width=".9"/>
<path d="M1753.91 152.39L1749.2 157.3" stroke="#2c62b4" stroke-width="2.2" stroke-linecap="round"/>
<circle cx="1756.5" cy="149.8" r="3.7" fill="#f4f9ff" stroke="#5a8fd8" stroke-width="1.6"/>
<circle cx="585.9" cy="174" r="5.6" fill="none" stroke="#5a5a5a" stroke-width="1.2"/>
<path d="M582.4 172.2h7L585.9 176.9Z" fill="#5a5a5a"/>
<circle cx="586" cy="565" r="5.6" fill="none" stroke="#5a5a5a" stroke-width="1.2"/>
<path d="M582.5 563.2h7L586 567.9Z" fill="#5a5a5a"/>
<circle cx="1752.9" cy="174.1" r="5.7" fill="none" stroke="#ffffff" stroke-width="1.2"/>
<path d="M1749.4 172.29999999999998h7L1752.9 177.0Z" fill="#ffffff"/>
<path d="M577.600 516.300l4.900 5.300l4.900-5.300" fill="none" stroke="#555" stroke-width="1.900"/>
<path d="M585.800 538.700l3.600-3.700l3.600 3.700M585.800 544.600l3.600 3.700l3.600-3.700" fill="none" stroke="#4a4a4a" stroke-width="2"/>
<path d="M6.500 189.500h7.500l3.500 3.500v9.500h-11Z" fill="#fdfdfd" stroke="#9a9a9a" stroke-width="1" stroke-linejoin="round"/><path d="M14 189.500v3.500h3.500" fill="none" stroke="#9a9a9a" stroke-width=".8"/>
<path d="M1753 196.800l3.600-4.200l3.600 4.200" fill="none" stroke="#505050" stroke-width="1.900"/>
<path d="M1753 847l3.600 4.200l3.600-4.200" fill="none" stroke="#505050" stroke-width="1.900"/>
<path d="M635.800 862.300l-4.200 3.400l4.200 3.400" fill="none" stroke="#505050" stroke-width="1.900"/>
<path d="M1737.500 862.300l4.200 3.400l-4.200 3.400" fill="none" stroke="#505050" stroke-width="1.900"/>
<text x="609.300" y="849.600" style="font-family:'Liberation Serif',serif;font-style:italic;font-weight:bold;font-size:12.500px;fill:#1c1c1c;letter-spacing:-.4px">fx</text>
<path d="M616.800 851.800h5.500l-2.750 3.300Z" fill="#000"/>
<rect x="653" y="839.500" width="1" height="17" fill="#000"/>
<rect x="1762.7" y="889.3" width="2" height="2" fill="#b8b09a"/>
<rect x="1759" y="893.3" width="2" height="2" fill="#b8b09a"/>
<rect x="1762.7" y="893.3" width="2" height="2" fill="#b8b09a"/>
<rect x="1755.3" y="897" width="2" height="2" fill="#b8b09a"/>
<rect x="1759" y="897" width="2" height="2" fill="#b8b09a"/>
<rect x="1762.7" y="897" width="2" height="2" fill="#b8b09a"/>
</svg>
</body></html>
